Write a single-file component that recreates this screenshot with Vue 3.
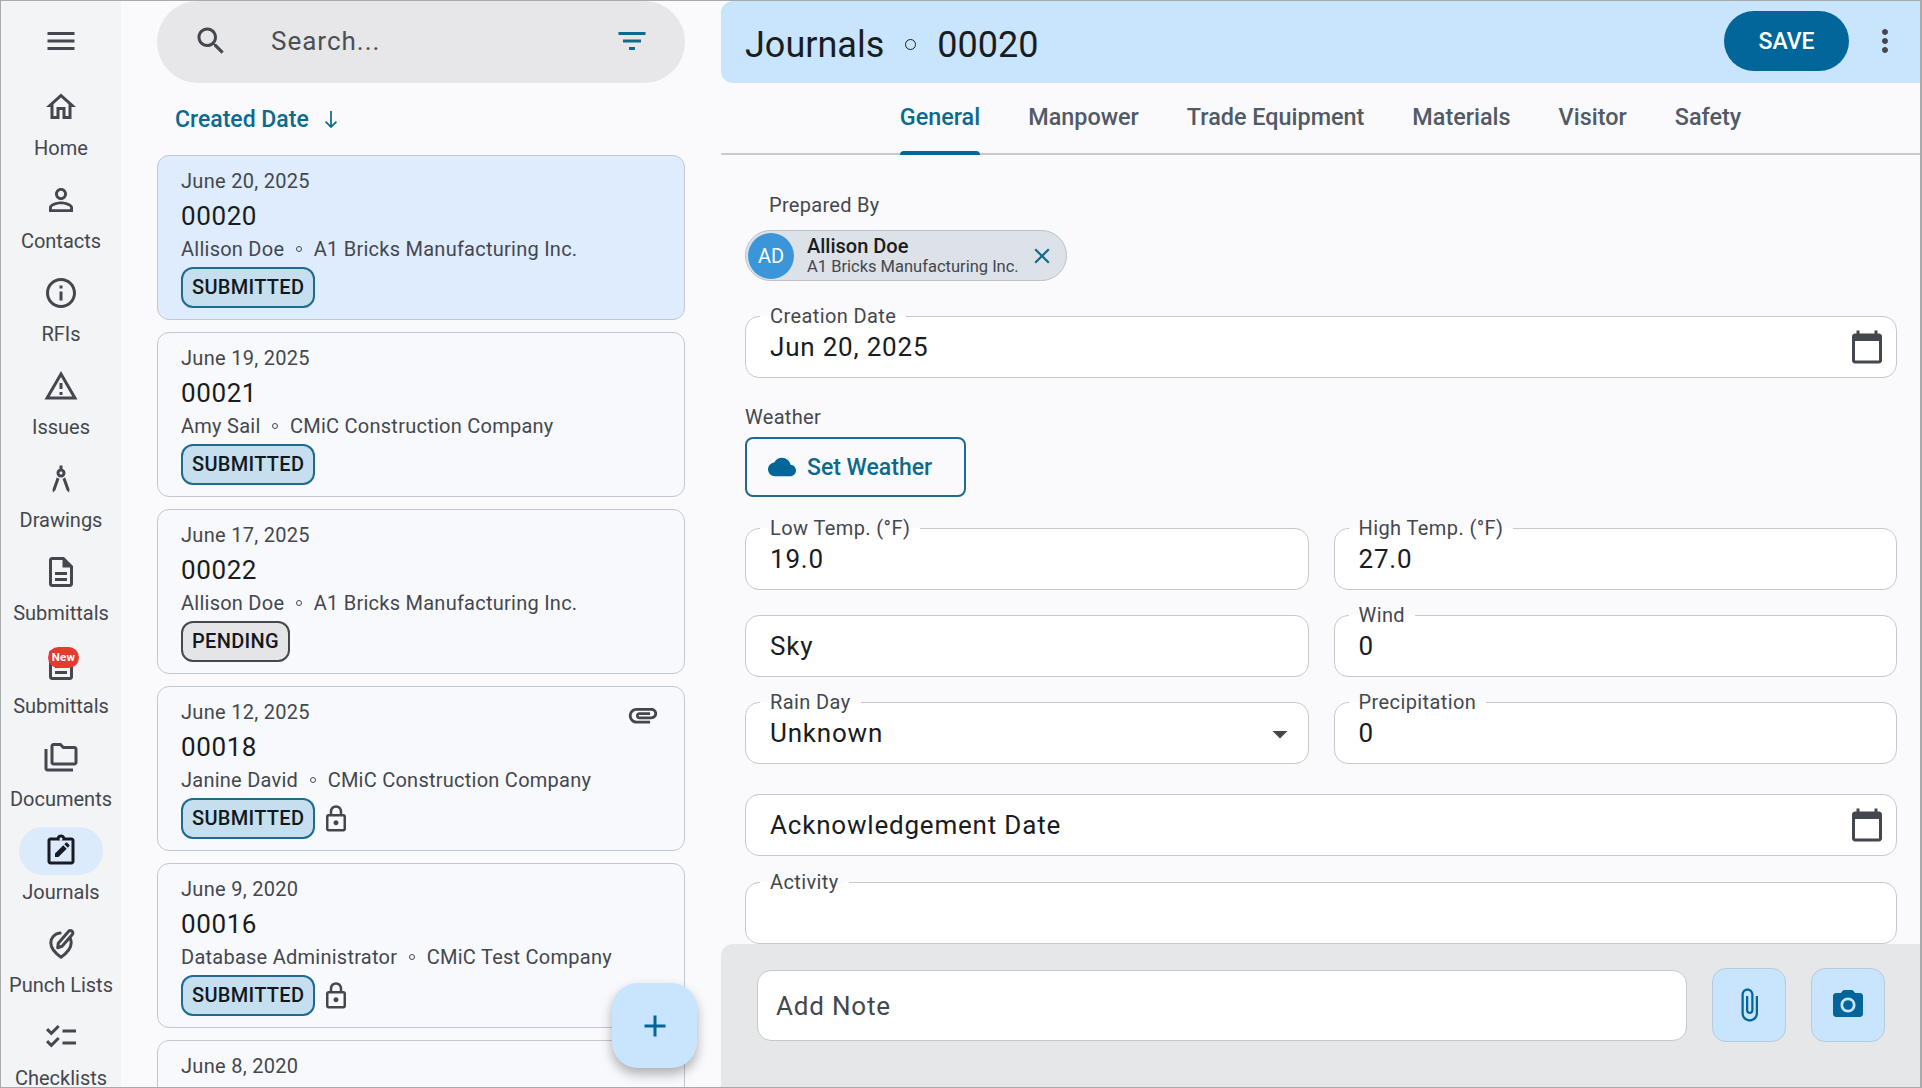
<template>
  <div class="screen">
    <nav class="rail">
      <div class="rail-menu">
        <svg class="rail-icon" viewBox="0 0 24 24"><path :d="icons.menu" /></svg>
      </div>
      <div v-for="item in navItems" :key="item.id" class="rail-item" :class="{ active: item.active }">
        <div class="rail-pill">
          <svg v-if="item.icon === 'punch'" class="rail-icon punch" viewBox="0 0 24 24">
            <path d="M11.400 4.700C7.800 5 5.200 7.800 5.200 11.200c0 3.200 2.800 6.800 6.800 9.600 4-2.800 6.800-6.400 6.800-9.600 0-.9-.2-1.800-.5-2.600" />
            <path d="M9.800 14.500l.4-3L17 3.600c.7-.7 1.700-.7 2.400-.1.700.7.700 1.600 0 2.300l-6.700 7.700z" />
          </svg>
          <svg v-else class="rail-icon" viewBox="0 0 24 24"><path :d="icons[item.icon]" /></svg>
          <span v-if="item.badge" class="rail-badge">{{ item.badge }}</span>
        </div>
        <div class="rail-label">{{ item.label }}</div>
      </div>
    </nav>

    <section class="list-col">
      <div class="search">
        <svg class="search-icon" viewBox="0 0 24 24"><path :d="icons.search" /></svg>
        <span class="search-text">Search...</span>
        <svg class="filter-icon" viewBox="0 0 24 24"><path :d="icons.filter" /></svg>
      </div>
      <div class="sort">
        <span>Created Date</span>
        <svg class="sort-icon" viewBox="0 0 24 24"><path d="M12 4.500v15M7 14.500l5 5 5-5" /></svg>
      </div>
      <div class="cards">
        <div v-for="card in cards" :key="card.date" class="card" :class="{ selected: card.selected }">
          <div class="card-date">{{ card.date }}</div>
          <svg v-if="card.attach" class="card-clip" viewBox="0 0 24 24"><path :d="icons.attachment" /></svg>
          <template v-if="card.number">
            <div class="card-num">{{ card.number }}</div>
            <div class="card-sub">
              <span>{{ card.person }}</span>
              <i class="sep"></i>
              <span>{{ card.company }}</span>
            </div>
            <div class="card-status">
              <span class="status" :class="card.status.toLowerCase()">{{ card.status }}</span>
              <svg v-if="card.locked" class="lock" viewBox="0 0 24 24"><path :d="icons.lock" /></svg>
            </div>
          </template>
        </div>
      </div>
      <button class="fab">
        <svg viewBox="0 0 24 24"><path :d="icons.add" /></svg>
      </button>
    </section>

    <section class="detail">
      <header class="detail-head">
        <h1>Journals</h1>
        <i class="head-sep"></i>
        <h1>00020</h1>
        <button class="save">SAVE</button>
        <svg class="kebab" viewBox="0 0 24 24"><path :d="icons.more" /></svg>
      </header>

      <div class="tabs">
        <div v-for="tab in tabs" :key="tab" class="tab" :class="{ active: tab === 'General' }">{{ tab }}</div>
      </div>

      <div class="form">
        <div class="plain-label indent">Prepared By</div>
        <div class="person-chip">
          <span class="avatar">AD</span>
          <div class="person-text">
            <div class="person-name">Allison Doe</div>
            <div class="person-org">A1 Bricks Manufacturing Inc.</div>
          </div>
          <svg class="chip-x" viewBox="0 0 24 24"><path :d="icons.close" /></svg>
        </div>

        <div class="field mt-35">
          <label>Creation Date</label>
          <span>Jun 20, 2025</span>
          <svg class="cal" viewBox="0 0 24 24"><path :d="icons.calendar" /></svg>
        </div>

        <div class="plain-label weather-label">Weather</div>
        <button class="weather-btn">
          <svg viewBox="0 0 24 24"><path :d="icons.cloud" /></svg>
          Set Weather
        </button>

        <div class="grid-2">
          <div class="field"><label>Low Temp. (°F)</label><span>19.0</span></div>
          <div class="field"><label>High Temp. (°F)</label><span>27.0</span></div>
          <div class="field"><span>Sky</span></div>
          <div class="field"><label>Wind</label><span>0</span></div>
          <div class="field">
            <label>Rain Day</label><span>Unknown</span>
            <svg class="caret" viewBox="0 0 24 24"><path d="M7 10l5 5 5-5z" /></svg>
          </div>
          <div class="field"><label>Precipitation</label><span>0</span></div>
        </div>

        <div class="field mt-30">
          <span>Acknowledgement Date</span>
          <svg class="cal" viewBox="0 0 24 24"><path :d="icons.calendar" /></svg>
        </div>
        <div class="field mt-26">
          <label>Activity</label>
        </div>
      </div>

      <footer class="note-bar">
        <div class="note-input">Add Note</div>
        <button class="note-btn">
          <svg viewBox="0 0 24 24"><path :d="icons.attach" /></svg>
        </button>
        <button class="note-btn">
          <svg viewBox="0 0 24 24"><circle cx="12" cy="12" r="3.2" /><path :d="icons.camera" /></svg>
        </button>
      </footer>
    </section>
  </div>
</template>

<script setup>
const icons = {
  menu: 'M3 18h18v-2H3v2zm0-5h18v-2H3v2zm0-7v2h18V6H3z',
  home: 'M12 5.69l5 4.5V18h-2v-6H9v6H7v-7.81l5-4.5M12 3L2 12h3v8h6v-6h2v6h6v-8h3L12 3z',
  person: 'M12 5.9c1.16 0 2.1.94 2.1 2.1s-.94 2.1-2.1 2.1S9.9 9.16 9.9 8s.94-2.1 2.1-2.1m0 9c2.97 0 6.1 1.46 6.1 2.1v1.1H5.9V17c0-.64 3.13-2.1 6.1-2.1M12 4C9.79 4 8 5.79 8 8s1.79 4 4 4 4-1.79 4-4-1.79-4-4-4zm0 9c-2.67 0-8 1.34-8 4v3h16v-3c0-2.66-5.33-4-8-4z',
  info: 'M11 7h2v2h-2zm0 4h2v6h-2zm1-9C6.48 2 2 6.48 2 12s4.48 10 10 10 10-4.48 10-10S17.52 2 12 2zm0 18c-4.41 0-8-3.59-8-8s3.59-8 8-8 8 3.59 8 8-3.59 8-8 8z',
  warning: 'M12 5.99L19.53 19H4.47L12 5.99M12 2L1 21h22L12 2zm1 14h-2v2h2v-2zm0-6h-2v4h2v-4z',
  drawing: 'M6.36 18.78L6.61 21l1.62-1.54 2.77-7.6c-.68-.17-1.28-.51-1.77-.98l-2.87 7.9zM14.77 10.88c-.49.47-1.1.81-1.77.98l2.77 7.6L17.39 21l.26-2.22-2.88-7.9zM15 8c0-1.3-.84-2.4-2-2.82V3h-2v2.18C9.84 5.6 9 6.7 9 8c0 1.66 1.34 3 3 3s3-1.34 3-3zm-3 1c-.55 0-1-.45-1-1s.45-1 1-1 1 .45 1 1-.45 1-1 1z',
  doc: 'M8 16h8v2H8zm0-4h8v2H8zm6-10H6c-1.1 0-2 .9-2 2v16c0 1.1.89 2 1.99 2H18c1.1 0 2-.9 2-2V8l-6-6zm4 18H6V4h7v5h5v11z',
  folder: 'M3 19h17v2H3c-1.1 0-2-.9-2-2V6h2v13zM23 6v9c0 1.1-.9 2-2 2H7c-1.1 0-2-.9-2-2l.01-11C5.01 2.9 5.9 2 7 2h5l2 2h7c1.1 0 2 .9 2 2zM7 15h14V6h-7.83l-2-2H7v11z',
  journal: 'M19 3h-4.18C14.4 1.84 13.3 1 12 1s-2.4.84-2.82 2H5c-1.1 0-2 .9-2 2v14c0 1.1.9 2 2 2h14c1.1 0 2-.9 2-2V5c0-1.1-.9-2-2-2zm-7 0c.55 0 1 .45 1 1s-.45 1-1 1-1-.45-1-1 .45-1 1-1zm7 16H5V5h14v14zM8 16v-2.3l5.5-5.5 2.3 2.3-5.5 5.500zM16.5 9.8l-2.3-2.3 1.1-1.1c.2-.2.5-.2.7 0l1.6 1.6c.2.2.2.5 0 .7z',
  check: 'M22 7h-9v2h9V7zM22 15h-9v2h9v-2zM5.54 11L2 7.46l1.41-1.41 2.12 2.12 4.24-4.24 1.41 1.41L5.54 11zM5.54 19L2 15.46l1.41-1.41 2.12 2.12 4.24-4.24 1.41 1.41L5.54 19z',
  search: 'M15.5 14h-.79l-.28-.27C15.41 12.59 16 11.11 16 9.5 16 5.91 13.09 3 9.5 3S3 5.91 3 9.5 5.91 16 9.5 16c1.61 0 3.09-.59 4.23-1.57l.27.28v.79l5 4.99L20.49 19l-4.99-5zm-6 0C7.01 14 5 11.99 5 9.5S7.01 5 9.5 5 14 7.01 14 9.5 11.99 14 9.5 14z',
  filter: 'M10 18h4v-2h-4v2zM3 6v2h18V6H3zm3 7h12v-2H6v2z',
  attachment: 'M2 12.5C2 9.46 4.46 7 7.5 7H18c2.21 0 4 1.79 4 4s-1.79 4-4 4H9.5C8.12 15 7 13.88 7 12.5S8.12 10 9.5 10H17v2H9.41c-.55 0-.55 1 0 1H18c1.1 0 2-.9 2-2s-.9-2-2-2H7.5C5.57 9 4 10.57 4 12.5S5.57 16 7.5 16H17v2H7.5C4.46 18 2 15.54 2 12.5z',
  attach: 'M16.5 6v11.5c0 2.21-1.79 4-4 4s-4-1.79-4-4V5c0-1.38 1.12-2.5 2.5-2.5s2.5 1.12 2.5 2.5v10.5c0 .55-.45 1-1 1s-1-.45-1-1V6H10v9.5c0 1.38 1.12 2.5 2.5 2.5s2.5-1.12 2.5-2.5V5c0-2.21-1.79-4-4-4S7 2.79 7 5v12.5c0 3.04 2.46 5.5 5.5 5.5s5.5-2.46 5.5-5.5V6h-1.5z',
  lock: 'M18 8h-1V6c0-2.76-2.24-5-5-5S7 3.24 7 6v2H6c-1.1 0-2 .9-2 2v10c0 1.1.9 2 2 2h12c1.1 0 2-.9 2-2V10c0-1.1-.9-2-2-2zM9 6c0-1.66 1.34-3 3-3s3 1.34 3 3v2H9V6zm9 14H6V10h12v10zm-6-3c1.1 0 2-.9 2-2s-.9-2-2-2-2 .9-2 2 .9 2 2 2z',
  calendar: 'M20 3h-1V1h-2v2H7V1H5v2H4c-1.1 0-2 .9-2 2v16c0 1.1.9 2 2 2h16c1.1 0 2-.9 2-2V5c0-1.1-.9-2-2-2zm0 18H4V8h16v13z',
  cloud: 'M19.35 10.04C18.67 6.59 15.64 4 12 4 9.11 4 6.6 5.64 5.35 8.04 2.34 8.36 0 10.91 0 14c0 3.31 2.69 6 6 6h13c2.76 0 5-2.24 5-5 0-2.64-2.05-4.78-4.65-4.96z',
  camera: 'M9 2L7.17 4H4c-1.1 0-2 .9-2 2v12c0 1.1.9 2 2 2h16c1.1 0 2-.9 2-2V6c0-1.1-.9-2-2-2h-3.17L15 2H9zm3 15c-2.76 0-5-2.24-5-5s2.24-5 5-5 5 2.24 5 5-2.24 5-5 5z',
  close: 'M19 6.41L17.59 5 12 10.59 6.41 5 5 6.41 10.59 12 5 17.59 6.41 19 12 13.41 17.59 19 19 17.59 13.41 12z',
  more: 'M12 8c1.1 0 2-.9 2-2s-.9-2-2-2-2 .9-2 2 .9 2 2 2zm0 2c-1.1 0-2 .9-2 2s.9 2 2 2 2-.9 2-2-.9-2-2-2zm0 6c-1.1 0-2 .9-2 2s.9 2 2 2 2-.9 2-2-.9-2-2-2z',
  add: 'M19 13h-6v6h-2v-6H5v-2h6V5h2v6h6v2z'
}

const navItems = [
  { id: 1, label: 'Home', icon: 'home' },
  { id: 2, label: 'Contacts', icon: 'person' },
  { id: 3, label: 'RFIs', icon: 'info' },
  { id: 4, label: 'Issues', icon: 'warning' },
  { id: 5, label: 'Drawings', icon: 'drawing' },
  { id: 6, label: 'Submittals', icon: 'doc' },
  { id: 7, label: 'Submittals', icon: 'doc', badge: 'New' },
  { id: 8, label: 'Documents', icon: 'folder' },
  { id: 9, label: 'Journals', icon: 'journal', active: true },
  { id: 10, label: 'Punch Lists', icon: 'punch' },
  { id: 11, label: 'Checklists', icon: 'check' }
]

const cards = [
  { date: 'June 20, 2025', number: '00020', person: 'Allison Doe', company: 'A1 Bricks Manufacturing Inc.', status: 'SUBMITTED', selected: true },
  { date: 'June 19, 2025', number: '00021', person: 'Amy Sail', company: 'CMiC Construction Company', status: 'SUBMITTED' },
  { date: 'June 17, 2025', number: '00022', person: 'Allison Doe', company: 'A1 Bricks Manufacturing Inc.', status: 'PENDING' },
  { date: 'June 12, 2025', number: '00018', person: 'Janine David', company: 'CMiC Construction Company', status: 'SUBMITTED', locked: true, attach: true },
  { date: 'June 9, 2020', number: '00016', person: 'Database Administrator', company: 'CMiC Test Company', status: 'SUBMITTED', locked: true },
  { date: 'June 8, 2020' }
]

const tabs = ['General', 'Manpower', 'Trade Equipment', 'Materials', 'Visitor', 'Safety']
</script>

<style scoped>
.screen {
  width: 1922px;
  height: 1088px;
  box-sizing: border-box;
  border: 1px solid #a9aaac;
  border-right-width: 2px;
  display: flex;
  overflow: hidden;
  background: #fafafc;
  font-family: Roboto, "Liberation Sans", sans-serif;
  color: #1a1c20;
}

/* left rail */
.rail {
  width: 120px;
  flex: none;
  background: #f3f4f6;
  overflow: hidden;
}
.rail-menu {
  height: 82px;
  box-sizing: border-box;
  padding-bottom: 3px;
  display: flex;
  align-items: center;
  justify-content: center;
}
.rail-item {
  height: 93px;
  text-align: center;
}
.rail-pill {
  position: relative;
  width: 84px;
  height: 48px;
  margin: 0 auto;
  border-radius: 24px;
  display: flex;
  align-items: center;
  justify-content: center;
}
.rail-item.active .rail-pill {
  background: #dcebfc;
}
.rail-icon {
  width: 36px;
  height: 36px;
  fill: #44474e;
}
.rail-icon.punch {
  fill: none;
  stroke: #44474e;
  stroke-width: 2;
  stroke-linejoin: round;
  stroke-linecap: round;
}
.rail-item.active .rail-icon {
  fill: #181c22;
}
.rail-label {
  margin-top: 3px;
  font-size: 20px;
  line-height: 28px;
  color: #44474e;
  white-space: nowrap;
}
.rail-badge {
  position: absolute;
  left: 29px;
  top: 6px;
  width: 31px;
  height: 21px;
  border-radius: 11px;
  background: #e53a30;
  color: #fff;
  font-size: 11.500px;
  font-weight: 700;
  letter-spacing: 0.3px;
  line-height: 20px;
}

/* list column */
.list-col {
  position: relative;
  width: 600px;
  flex: none;
  box-sizing: border-box;
  padding: 0 36px;
}
.search {
  height: 82px;
  border-radius: 41px;
  background: #e7e7e9;
  display: flex;
  align-items: center;
  padding: 0 35px 0 36px;
}
.search-icon {
  width: 36px;
  height: 36px;
  margin-top: -2px;
  fill: #44474e;
}
.search-text {
  margin: -2px 0 0 42px;
  font-size: 26px;
  letter-spacing: 1px;
  color: #4b4e55;
  flex: 1;
}
.filter-icon {
  width: 36px;
  height: 36px;
  margin-top: -2px;
  fill: #0f6a91;
}
.sort {
  height: 72px;
  display: flex;
  align-items: center;
  padding-left: 18px;
  font-size: 23px;
  font-weight: 500;
  color: #0b6a8e;
}
.sort-icon {
  width: 26px;
  height: 26px;
  margin-left: 9px;
  fill: none;
  stroke: #0b6a8e;
  stroke-width: 1.6;
}
.cards {
  display: flex;
  flex-direction: column;
  gap: 12px;
}
.card {
  position: relative;
  flex: none;
  height: 165px;
  box-sizing: border-box;
  border: 1.5px solid #c3c7d0;
  border-radius: 12px;
  padding: 12px 23px 0;
  background: #f8f9fc;
}
.card.selected {
  background: #deecfd;
}
.card-date {
  font-size: 20px;
  line-height: 26px;
  letter-spacing: 0.3px;
  color: #44474e;
}
.card-num {
  margin-top: 5px;
  font-size: 26px;
  line-height: 34px;
  letter-spacing: 0.6px;
  color: #191c20;
}
.card-sub {
  margin-top: 2px;
  display: flex;
  align-items: center;
  font-size: 20px;
  line-height: 28px;
  letter-spacing: 0.25px;
  color: #44474e;
  white-space: nowrap;
}
.sep {
  width: 6px;
  height: 6px;
  box-sizing: border-box;
  border: 1px solid #44474e;
  border-radius: 50%;
  margin: 0 12px 0 11.500px;
}
.card-status {
  margin-top: 4px;
  display: flex;
  align-items: center;
}
.status {
  box-sizing: border-box;
  height: 41px;
  line-height: 37px;
  padding: 0 9px;
  border: 2px solid #1f6a8e;
  border-radius: 12px;
  background: #c5dfee;
  font-size: 20px;
  font-weight: 500;
  letter-spacing: 0.3px;
  color: #12181e;
}
.status.pending {
  border-color: #44474e;
  background: #e5e5e7;
}
.lock {
  width: 30px;
  height: 30px;
  margin-left: 6px;
  fill: #44474e;
}
.card-clip {
  position: absolute;
  right: 24px;
  top: 11px;
  width: 34px;
  height: 34px;
  fill: #44474e;
}
.fab {
  position: absolute;
  left: 491px;
  top: 982px;
  width: 85px;
  height: 85px;
  border: 0;
  border-radius: 26px;
  background: #c9e4fd;
  box-shadow: 0 6px 12px rgba(0, 0, 0, 0.3);
  display: flex;
  align-items: center;
  justify-content: center;
}
.fab svg {
  width: 36px;
  height: 36px;
  fill: #02669b;
}

/* detail */
.detail {
  position: relative;
  flex: 1;
  min-width: 0;
  display: flex;
  flex-direction: column;
}
.detail-head {
  height: 82px;
  flex: none;
  display: flex;
  align-items: center;
  background: #c9e4fd;
  border-radius: 12px 0 0 12px;
  padding: 0 17px 0 24px;
}
.detail-head h1 {
  margin: 5px 0 0;
  font-size: 36px;
  font-weight: 400;
  color: #191c20;
}
.head-sep {
  width: 11px;
  height: 11px;
  box-sizing: border-box;
  border: 1.5px solid #191c20;
  border-radius: 50%;
  margin: 5px 21px 0;
}
.save {
  margin-left: auto;
  width: 125px;
  height: 60px;
  margin-top: -2px;
  border: 0;
  border-radius: 30px;
  background: #02669b;
  color: #fff;
  font-family: inherit;
  font-size: 23px;
  font-weight: 500;
}
.kebab {
  width: 36px;
  height: 36px;
  margin: -2px 0 0 18px;
  fill: #44474e;
}
.tabs {
  height: 72px;
  flex: none;
  box-sizing: border-box;
  display: flex;
  justify-content: center;
  gap: 48px;
  border-bottom: 2px solid #c8cacf;
}
.tab {
  position: relative;
  line-height: 68px;
  font-size: 23.400px;
  font-weight: 500;
  color: #515a66;
}
.tab.active {
  color: #0b6a8e;
}
.tab.active::after {
  content: "";
  position: absolute;
  left: 0;
  right: 0;
  bottom: -2px;
  height: 4px;
  border-radius: 4px 4px 0 0;
  background: #02669b;
}
.form {
  flex: 1;
  min-height: 0;
  padding: 0 23px 0 24px;
  overflow: hidden;
}
.plain-label {
  font-size: 20px;
  line-height: 28px;
  color: #44474e;
  letter-spacing: 0.3px;
}
.indent {
  margin: 36px 0 11px 24px;
}
.person-chip {
  width: 322px;
  height: 51px;
  box-sizing: border-box;
  border: 1.5px solid #bcc0c8;
  border-radius: 26px;
  background: #dde1e8;
  display: flex;
  align-items: center;
  padding-left: 2px;
}
.avatar {
  width: 46px;
  height: 46px;
  flex: none;
  border-radius: 50%;
  background: #3a96d8;
  color: #fff;
  font-size: 20px;
  line-height: 46px;
  text-align: center;
}
.person-text {
  margin-left: 13px;
  white-space: nowrap;
}
.person-name {
  font-size: 20px;
  font-weight: 500;
  line-height: 22px;
}
.person-org {
  font-size: 16.500px;
  line-height: 20px;
  color: #44474e;
}
.chip-x {
  width: 26px;
  height: 26px;
  margin-left: 10px;
  fill: #0b6a8e;
}
.field {
  position: relative;
  height: 62px;
  box-sizing: border-box;
  border: 1.5px solid #c6c8cc;
  border-radius: 14px;
  background: #fff;
  display: flex;
  align-items: center;
  padding: 0 24px;
  font-size: 26px;
  letter-spacing: 0.8px;
  color: #191c20;
}
.field label {
  position: absolute;
  left: 14px;
  top: -13px;
  padding: 0 10px;
  height: 24px;
  line-height: 24px;
  font-size: 20px;
  letter-spacing: 0.4px;
  color: #44474e;
  background: linear-gradient(#fafafc 50%, #fff 50%);
}
.mt-35 {
  margin-top: 35px;
}
.mt-30 {
  margin-top: 30px;
}
.mt-26 {
  margin-top: 26px;
}
.cal {
  position: absolute;
  right: 11px;
  top: 11.500px;
  width: 36px;
  height: 36px;
  fill: #44474e;
}
.caret {
  position: absolute;
  right: 10px;
  top: 13px;
  width: 36px;
  height: 36px;
  fill: #44474e;
}
.weather-label {
  margin-top: 25px;
}
.weather-btn {
  display: flex;
  align-items: center;
  width: 221px;
  height: 60px;
  margin-top: 6px;
  box-sizing: border-box;
  padding: 0 0 0 21px;
  border: 2px solid #1f6a8e;
  border-radius: 8px;
  background: transparent;
  color: #0b6a8e;
  font-family: inherit;
  font-size: 23px;
  font-weight: 500;
  white-space: nowrap;
}
.weather-btn svg {
  width: 28px;
  height: 28px;
  margin-right: 11px;
  fill: #02669b;
}
.grid-2 {
  margin-top: 31px;
  display: grid;
  grid-template-columns: 1fr 1fr;
  gap: 25px;
}
.note-bar {
  position: absolute;
  left: 0;
  right: 0;
  bottom: 0;
  height: 143px;
  background: #e6e7e9;
  border-radius: 12px 0 0 0;
  display: flex;
  align-items: flex-start;
  padding: 26px 0 0 36px;
  box-sizing: border-box;
}
.note-input {
  width: 930px;
  height: 71px;
  box-sizing: border-box;
  border: 1.5px solid #c6c8cc;
  border-radius: 14px;
  background: #fff;
  line-height: 71px;
  padding-left: 18px;
  font-size: 26px;
  letter-spacing: 0.8px;
  color: #44474e;
}
.note-btn {
  width: 74px;
  height: 74px;
  margin: -2px 0 0 25px;
  border: 1.5px solid #b8cbdc;
  border-radius: 14px;
  background: #c9e4fd;
  display: flex;
  align-items: center;
  justify-content: center;
  padding: 0;
}
.note-btn svg {
  width: 36px;
  height: 36px;
  fill: #02669b;
}
</style>

<style>
html, body {
  margin: 0;
  background: #fafafc;
}
</style>
